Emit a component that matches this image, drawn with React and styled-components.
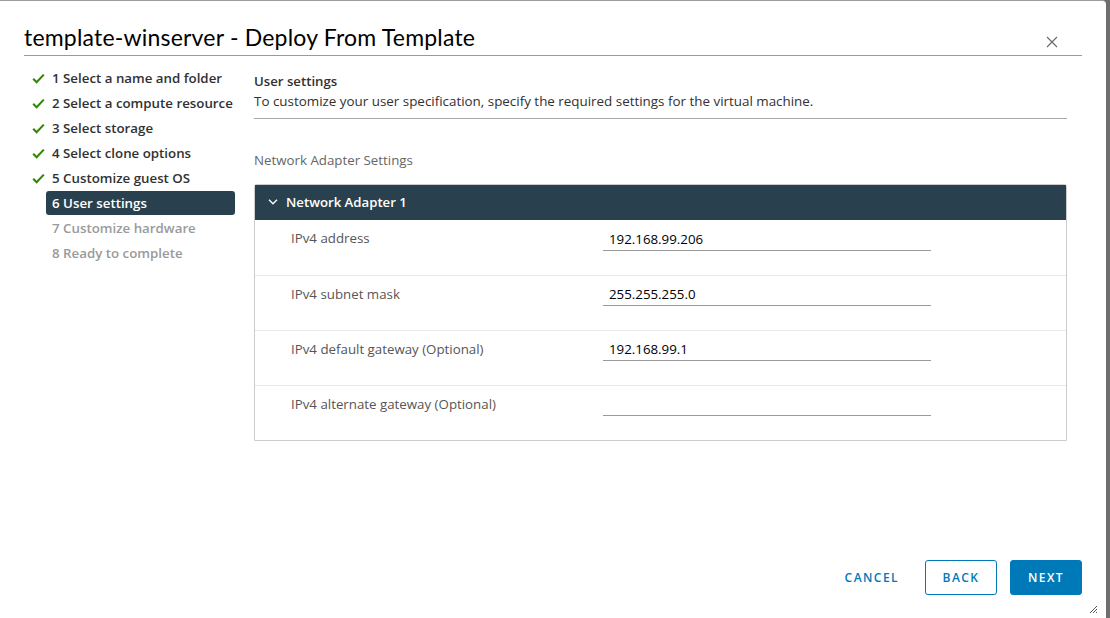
import React from "react";
import styled, { createGlobalStyle } from "styled-components";

const Global = createGlobalStyle`
  html, body { margin: 0; padding: 0; }
  body {
    background: #6e6e6e;
    font-family: "Open Sans", Lato, "Liberation Sans", sans-serif;
    overflow: hidden;
  }
  * { box-sizing: border-box; }
`;

const Modal = styled.div`
  position: relative;
  width: 1106px;
  height: 618px;
  background: #fff;
  border-top: 1px solid #9c9c9c;
  border-top-right-radius: 4px;
  display: flex;
  flex-direction: column;
`;

const Header = styled.div`
  margin: 0 24px 0 24px;
  padding-top: 20px;
  height: 55px;
  display: flex;
  align-items: flex-start;
  justify-content: space-between;
  border-bottom: 1px solid #9a9a9a;
`;

const Title = styled.h1`
  margin: 0;
  font-family: Lato, "Open Sans", sans-serif;
  font-size: 23px;
  font-weight: 400;
  line-height: 32px;
  color: #000;
  letter-spacing: 0.2px;
`;

const Close = styled.button`
  border: 0;
  background: none;
  padding: 0;
  margin: 15px 24px 0 0;
  width: 12px;
  height: 12px;
  display: flex;
  cursor: pointer;
`;

const Body = styled.div`
  flex: 1;
  display: flex;
  padding-left: 24px;
`;

const Steps = styled.ol`
  list-style: none;
  margin: 0;
  padding: 10px 0 0 0;
  width: 211px;
  flex: none;
`;

const Step = styled.li`
  display: flex;
  align-items: center;
  height: 24px;
  margin-bottom: 1px;
`;

const Mark = styled.span`
  width: 22px;
  flex: none;
  display: flex;
  padding-left: 8px;
`;

const StepLabel = styled.span`
  flex: 1;
  height: 24px;
  line-height: 24px;
  padding-left: 6px;
  border-radius: 3px;
  font-size: 13.3px;
  font-weight: 600;
  white-space: nowrap;
  color: ${(p) => (p.$state === "active" ? "#fff" : p.$state === "todo" ? "#9a9a9a" : "#313131")};
  background: ${(p) => (p.$state === "active" ? "#29414e" : "transparent")};
`;

const Content = styled.div`
  flex: 1;
  margin-left: 19px;
  margin-right: 39px;
  padding-top: 15px;
  display: flex;
  flex-direction: column;
`;

const Intro = styled.div`
  border-bottom: 1px solid #a8a8a8;
  padding-bottom: 7px;
`;

const Heading = styled.div`
  font-size: 13.2px;
  font-weight: 600;
  line-height: 20px;
  color: #313131;
`;

const Desc = styled.div`
  font-size: 13.4px;
  line-height: 20px;
  color: #313131;
`;

const SectionTitle = styled.div`
  margin-top: 31px;
  font-size: 13.3px;
  line-height: 20px;
  color: #666;
`;

const Panel = styled.div`
  margin-top: 14px;
  border: 1px solid #ccc;
  border-radius: 3px 3px 0 0;
`;

const PanelHead = styled.div`
  height: 35px;
  background: #29414e;
  display: flex;
  align-items: center;
  padding: 0 0 1px 13px;
  gap: 8px;
  color: #fff;
  font-size: 13.2px;
  font-weight: 600;
`;

const Row = styled.div`
  height: 55px;
  display: grid;
  grid-template-columns: 312px 328px;
  align-items: start;
  padding: 8px 0 0 36px;
  border-top: ${(p) => (p.$first ? "0" : "1px solid #e8e8e8")};
`;

const Label = styled.div`
  font-size: 13.3px;
  line-height: 20px;
  color: #565656;
`;

const Input = styled.input`
  height: 23px;
  border: 0;
  border-bottom: 1px solid #9a9a9a;
  padding: 0 6px;
  margin-top: ${(p) => (p.$first ? "0" : "-1px")};
  font-family: inherit;
  font-size: 13.3px;
  color: #000;
  outline: none;
  background: transparent;
`;

const Footer = styled.div`
  display: flex;
  justify-content: flex-end;
  align-items: center;
  gap: 13px;
  padding: 0 24px 23px 0;
`;

const Button = styled.button`
  height: 35px;
  min-width: 72px;
  padding: 0 12px;
  border-radius: 3px;
  font-family: inherit;
  font-size: 12px;
  font-weight: 600;
  letter-spacing: 0.12em;
  text-transform: uppercase;
  cursor: pointer;
  border: 1px solid ${(p) => (p.$variant === "flat" ? "transparent" : "#0079b8")};
  color: ${(p) => (p.$variant === "primary" ? "#fff" : "#0079b8")};
  background: ${(p) => (p.$variant === "primary" ? "#0079b8" : "#fff")};
`;

const Grip = styled.svg`
  position: absolute;
  right: 8px;
  bottom: 4px;
`;

const Check = () => (
  <svg width="13" height="11" viewBox="0 0 13 11">
    <path d="M1.2 5.8 L4.6 9.2 L11.8 1.6" fill="none" stroke="#318700" strokeWidth="2.1" />
  </svg>
);

const steps = [
  ["1 Select a name and folder", "done"],
  ["2 Select a compute resource", "done"],
  ["3 Select storage", "done"],
  ["4 Select clone options", "done"],
  ["5 Customize guest OS", "done"],
  ["6 User settings", "active"],
  ["7 Customize hardware", "todo"],
  ["8 Ready to complete", "todo"],
];

const rows = [
  ["IPv4 address", "192.168.99.206"],
  ["IPv4 subnet mask", "255.255.255.0"],
  ["IPv4 default gateway (Optional)", "192.168.99.1"],
  ["IPv4 alternate gateway (Optional)", ""],
];

export default function App() {
  return (
    <>
      <Global />
      <Modal>
        <Header>
          <Title>template-winserver - Deploy From Template</Title>
          <Close aria-label="Close">
            <svg width="12" height="12" viewBox="0 0 12 12">
              <path d="M1 1 L11 11 M11 1 L1 11" stroke="#6a6a6a" strokeWidth="1.2" />
            </svg>
          </Close>
        </Header>
        <Body>
          <Steps>
            {steps.map(([t, s]) => (
              <Step key={t}>
                <Mark>{s === "done" ? <Check /> : null}</Mark>
                <StepLabel $state={s}>{t}</StepLabel>
              </Step>
            ))}
          </Steps>
          <Content>
            <Intro>
              <Heading>User settings</Heading>
              <Desc>To customize your user specification, specify the required settings for the virtual machine.</Desc>
            </Intro>
            <SectionTitle>Network Adapter Settings</SectionTitle>
            <Panel>
              <PanelHead>
                <svg width="10" height="6" viewBox="0 0 10 6">
                  <path d="M1 0.8 L5 4.8 L9 0.8" fill="none" stroke="#fff" strokeWidth="1.3" />
                </svg>
                Network Adapter 1
              </PanelHead>
              {rows.map(([l, v], i) => (
                <Row key={l} $first={i === 0}>
                  <Label>{l}</Label>
                  <Input $first={i === 0} defaultValue={v} />
                </Row>
              ))}
            </Panel>
          </Content>
        </Body>
        <Footer>
          <Button $variant="flat">Cancel</Button>
          <Button $variant="outline">Back</Button>
          <Button $variant="primary">Next</Button>
        </Footer>
        <Grip width="9" height="9" viewBox="0 0 9 9">
          <path d="M8 1 L1 8 M8 4 L4 8 M8 7 L7 8" stroke="#555" strokeWidth="1" />
        </Grip>
      </Modal>
    </>
  );
}
